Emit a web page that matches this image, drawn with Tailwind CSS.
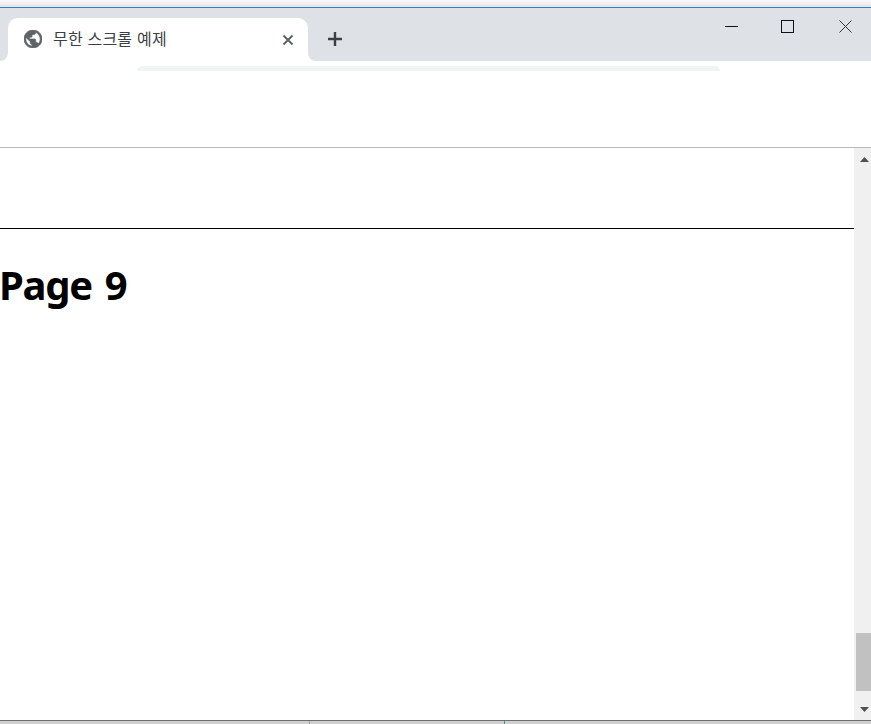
<!DOCTYPE html>
<html lang="ko">
<head>
<meta charset="utf-8">
<script src="https://cdn.jsdelivr.net/npm/@tailwindcss/browser@4"></script>
</head>
<body class="bg-white overflow-hidden font-['Noto_Sans','Noto_Sans_CJK_KR',sans-serif]">
<div class="w-[871px] h-[724px] flex flex-col overflow-hidden">
  <!-- window top edge -->
  <div class="h-[7px] bg-gradient-to-b from-[#fafafa] to-[#e4e4e4] shrink-0"></div>
  <div class="h-px bg-[#2b7fd0] shrink-0"></div>
  <!-- tab strip -->
  <div class="h-[53px] bg-[#dee1e6] shrink-0 flex items-end relative">
    <div class="ml-2 w-[300px] h-[43px] bg-white rounded-t-[10px] flex items-center pl-4 pr-[13px] relative">
      <div class="absolute left-[-8px] bottom-0 w-2 h-2 bg-white"><div class="w-2 h-2 bg-[#dee1e6] rounded-br-[8px]"></div></div>
      <div class="absolute right-[-8px] bottom-0 w-2 h-2 bg-white"><div class="w-2 h-2 bg-[#dee1e6] rounded-bl-[8px]"></div></div>
      <svg class="w-[18px] h-[18px] shrink-0 mb-[1px]" viewBox="2 2 20 20"><path fill="#5f6368" stroke="#5f6368" stroke-width=".8" d="M12 2C6.48 2 2 6.48 2 12s4.48 10 10 10 10-4.48 10-10S17.52 2 12 2zM4 12c0-.61.08-1.21.21-1.78L8.99 15v1c0 1.1.9 2 2 2v1.93C7.06 19.43 4 16.07 4 12zm13.89 5.4c-.26-.81-1-1.4-1.9-1.4h-1v-3c0-.55-.45-1-1-1h-6v-2h2c.55 0 1-.45 1-1V7h2c1.1 0 2-.9 2-2v-.41C17.92 5.77 20 8.65 20 12c0 2.08-.81 3.98-2.11 5.4z"/></svg>
      <span class="ml-[11px] mb-[3px] text-[16px] leading-5 tracking-[0.2px] text-[#3c4043] font-['Noto_Sans_CJK_KR',sans-serif] whitespace-nowrap">무한 스크롤 예제</span>
      <svg class="w-[14px] h-[14px] ml-auto" viewBox="0 0 14 14"><path d="M2.5 2.5l9 9M11.5 2.5l-9 9" stroke="#5f6368" stroke-width="2" fill="none"/></svg>
    </div>
    <svg class="ml-[18px] mb-[13px] w-[18px] h-[18px]" viewBox="0 0 18 18"><path d="M9 2v14M2 9h14" stroke="#3c4043" stroke-width="2.4" fill="none"/></svg>
    <div class="absolute top-0 right-0 h-[38px] flex items-center pr-[19px] gap-[43px] pb-[2px]">
      <svg class="w-[13px] h-[13px]" viewBox="0 0 13 13"><path d="M0 6.5h13" stroke="#111" stroke-width="1" fill="none"/></svg>
      <svg class="w-[13px] h-[13px]" viewBox="0 0 13 13"><rect x=".5" y=".5" width="12" height="12" stroke="#111" fill="none"/></svg>
      <svg class="w-[13px] h-[13px] ml-[2px]" viewBox="0 0 13 13"><path d="M.5.5l12 12M12.5.5l-12 12" stroke="#333" stroke-width="1" fill="none"/></svg>
    </div>
  </div>
  <!-- toolbar -->
  <div class="h-[87px] bg-white shrink-0 border-b border-[#b8b8b8] pt-[5px]">
    <div class="ml-[137px] w-[583px] h-[5px] bg-[#f1f3f4] rounded-t-[12px]"></div>
  </div>
  <!-- viewport -->
  <div class="flex-1 flex min-h-0">
    <main class="flex-1 min-w-0 pt-[80px]">
      <div class="h-px bg-black"></div>
      <h1 class="mt-[28px] ml-[-1px] text-[40px] leading-[56px] tracking-[-1.3px] [word-spacing:4px] font-bold text-black font-['Noto_Sans','Noto_Sans_CJK_KR',sans-serif]">Page 9</h1>
    </main>
    <div class="w-[17px] bg-[#f0f0f0] shrink-0 flex flex-col items-center relative">
      <svg class="absolute top-[9px] left-[6px] w-[9px] h-[5px]" viewBox="0 0 9 5"><path d="M4.5 0L9 5H0z" fill="#505050"/></svg>
      <div class="absolute left-[2px] right-0 top-[485px] h-[58px] bg-[#c1c1c1]"></div>
      <svg class="absolute bottom-[8px] left-[6px] w-[9px] h-[5px]" viewBox="0 0 9 5"><path d="M0 0h9L4.5 5z" fill="#505050"/></svg>
    </div>
  </div>
  <!-- bottom edge -->
  <div class="h-px bg-[#6e6e6e] shrink-0"></div>
  <div class="h-[3px] bg-[#d0d0d0] shrink-0 flex">
    <div class="ml-[309px] w-px bg-[#a0a0a0]"></div>
    <div class="ml-[194px] w-px bg-[#4a8f8f]"></div>
  </div>
</div>
</body>
</html>
